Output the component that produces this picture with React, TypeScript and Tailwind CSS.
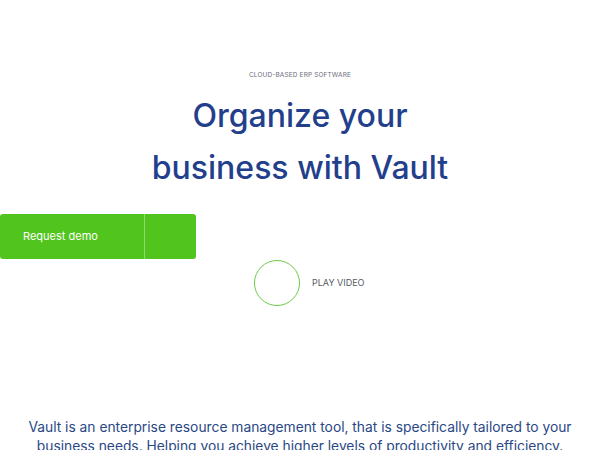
export default function App() {
  return (
    <div
      className="flex min-h-[450px] w-[600px] flex-col bg-white"
      style={{ fontFamily: "Inter, 'Noto Sans', sans-serif" }}
    >
      <p className="mt-[71px] text-center text-[6.5px] uppercase tracking-[0.02em] text-[#6b6f7a]">
        Cloud-based ERP software
      </p>
      <h1 className="mt-[9px] text-center text-[32px] font-medium leading-[52px] text-[#233f8c]">
        Organize your
        <br />
        business with Vault
      </h1>
      <div className="mt-[20px] flex">
        <button
          type="button"
          className="flex h-[45px] w-[196px] items-stretch rounded-[3px] bg-[#52c41e] text-white"
        >
          <span className="flex w-[144px] items-center pl-[23px] text-[11px]">Request demo</span>
          <span className="w-px bg-[#8fdc6a]" />
          <span className="flex-1" />
        </button>
      </div>
      <div className="ml-[254px] mt-px flex items-center gap-[12px]">
        <span className="size-[46px] rounded-full border-[1.5px] border-[#6ccb46]" />
        <span className="text-[9px] uppercase text-[#555a66]">Play video</span>
      </div>
      <p className="mt-[112px] whitespace-nowrap text-center text-[13.8px] leading-[19px] text-[#2a4785]">
        Vault is an enterprise resource management tool, that is specifically tailored to your
        <br />
        business needs. Helping you achieve higher levels of productivity and efficiency.
      </p>
    </div>
  );
}
